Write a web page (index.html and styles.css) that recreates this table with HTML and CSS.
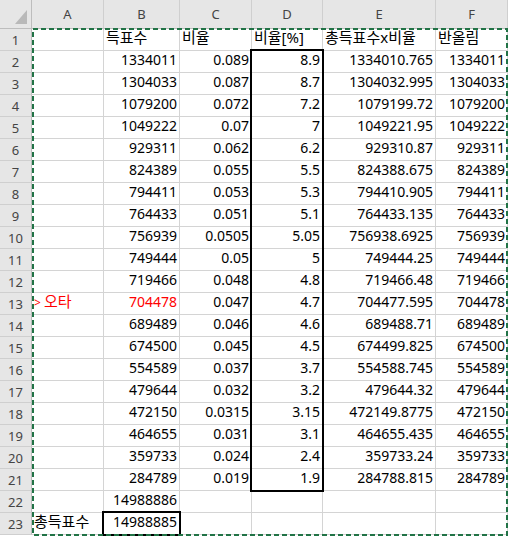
FILE: index.html
```
<!DOCTYPE html>
<html lang="ko">
<head>
<meta charset="utf-8">
<title>Sheet</title>
<link rel="stylesheet" href="styles.css">
</head>
<body>
<div class="sheet">
  <div class="corner"><svg class="tri" width="32" height="28" viewBox="0 0 32 28"><polygon points="15,24 27,24 27,10" fill="#b9b9b9"/></svg></div>
  <div class="ch">A</div><div class="ch">B</div><div class="ch">C</div><div class="ch">D</div><div class="ch">E</div><div class="ch">F</div>

  <div class="rh">1</div><div class="c"></div><div class="c ko">득표수</div><div class="c ko">비율</div><div class="c ko">비율[%]</div><div class="c ko">총득표수x비율</div><div class="c ko">반올림</div>
  <div class="rh">2</div><div class="c"></div><div class="c n">1334011</div><div class="c n">0.089</div><div class="c n">8.9</div><div class="c n">1334010.765</div><div class="c n">1334011</div>
  <div class="rh">3</div><div class="c"></div><div class="c n">1304033</div><div class="c n">0.087</div><div class="c n">8.7</div><div class="c n">1304032.995</div><div class="c n">1304033</div>
  <div class="rh">4</div><div class="c"></div><div class="c n">1079200</div><div class="c n">0.072</div><div class="c n">7.2</div><div class="c n">1079199.72</div><div class="c n">1079200</div>
  <div class="rh">5</div><div class="c"></div><div class="c n">1049222</div><div class="c n">0.07</div><div class="c n">7</div><div class="c n">1049221.95</div><div class="c n">1049222</div>
  <div class="rh">6</div><div class="c"></div><div class="c n">929311</div><div class="c n">0.062</div><div class="c n">6.2</div><div class="c n">929310.87</div><div class="c n">929311</div>
  <div class="rh">7</div><div class="c"></div><div class="c n">824389</div><div class="c n">0.055</div><div class="c n">5.5</div><div class="c n">824388.675</div><div class="c n">824389</div>
  <div class="rh">8</div><div class="c"></div><div class="c n">794411</div><div class="c n">0.053</div><div class="c n">5.3</div><div class="c n">794410.905</div><div class="c n">794411</div>
  <div class="rh">9</div><div class="c"></div><div class="c n">764433</div><div class="c n">0.051</div><div class="c n">5.1</div><div class="c n">764433.135</div><div class="c n">764433</div>
  <div class="rh">10</div><div class="c"></div><div class="c n">756939</div><div class="c n">0.0505</div><div class="c n">5.05</div><div class="c n">756938.6925</div><div class="c n">756939</div>
  <div class="rh">11</div><div class="c"></div><div class="c n">749444</div><div class="c n">0.05</div><div class="c n">5</div><div class="c n">749444.25</div><div class="c n">749444</div>
  <div class="rh">12</div><div class="c"></div><div class="c n">719466</div><div class="c n">0.048</div><div class="c n">4.8</div><div class="c n">719466.48</div><div class="c n">719466</div>
  <div class="rh">13</div><div class="c ko red"><span class="gt">&gt;</span>오타</div><div class="c n red">704478</div><div class="c n">0.047</div><div class="c n">4.7</div><div class="c n">704477.595</div><div class="c n">704478</div>
  <div class="rh">14</div><div class="c"></div><div class="c n">689489</div><div class="c n">0.046</div><div class="c n">4.6</div><div class="c n">689488.71</div><div class="c n">689489</div>
  <div class="rh">15</div><div class="c"></div><div class="c n">674500</div><div class="c n">0.045</div><div class="c n">4.5</div><div class="c n">674499.825</div><div class="c n">674500</div>
  <div class="rh">16</div><div class="c"></div><div class="c n">554589</div><div class="c n">0.037</div><div class="c n">3.7</div><div class="c n">554588.745</div><div class="c n">554589</div>
  <div class="rh">17</div><div class="c"></div><div class="c n">479644</div><div class="c n">0.032</div><div class="c n">3.2</div><div class="c n">479644.32</div><div class="c n">479644</div>
  <div class="rh">18</div><div class="c"></div><div class="c n">472150</div><div class="c n">0.0315</div><div class="c n">3.15</div><div class="c n">472149.8775</div><div class="c n">472150</div>
  <div class="rh">19</div><div class="c"></div><div class="c n">464655</div><div class="c n">0.031</div><div class="c n">3.1</div><div class="c n">464655.435</div><div class="c n">464655</div>
  <div class="rh">20</div><div class="c"></div><div class="c n">359733</div><div class="c n">0.024</div><div class="c n">2.4</div><div class="c n">359733.24</div><div class="c n">359733</div>
  <div class="rh">21</div><div class="c"></div><div class="c n">284789</div><div class="c n">0.019</div><div class="c n">1.9</div><div class="c n">284788.815</div><div class="c n">284789</div>
  <div class="rh">22</div><div class="c"></div><div class="c n">14988886</div><div class="c"></div><div class="c"></div><div class="c"></div><div class="c"></div>
  <div class="rh">23</div><div class="c ko">총득표수</div><div class="c n">14988885</div><div class="c"></div><div class="c"></div><div class="c"></div><div class="c"></div>

  <div class="sel sel-d"></div>
  <div class="sel sel-b"></div>
  <svg class="marquee" width="508" height="537" viewBox="0 0 508 537"><rect x="33" y="29" width="474" height="506" fill="none" stroke="#217346" stroke-width="2" stroke-dasharray="5 3"/></svg>
</div>
</body>
</html>
```

FILE: styles.css
```
* { box-sizing: border-box; margin: 0; padding: 0; }
html, body { background: #ffffff; }
body { width: 508px; height: 537px; overflow: hidden; }

.sheet {
  position: relative;
  display: grid;
  grid-template-columns: 32px 72px 76px 72px 71px 113px 72px;
  grid-template-rows: 29px repeat(23, 22px);
  font-family: "Noto Sans", "Noto Sans CJK KR", sans-serif;
  font-size: 14px;
  color: #000;
}

.corner {
  background: #e6e6e6;
  border-right: 1px solid #bdbdbd;
  border-bottom: 1px solid #bdbdbd;
  position: relative;
}
.tri { display: block; }

.ch, .rh {
  background: #e6e6e6;
  color: #444;
  font-size: 13px;
  display: flex;
  align-items: center;
  justify-content: center;
}
.ch {
  border-right: 1px solid #cfcfcf;
  border-bottom: 1px solid #bdbdbd;
}
.rh {
  border-right: 1px solid #bdbdbd;
  border-bottom: 1px solid #cfcfcf;
}

.c {
  border-right: 1px solid #d4d4d4;
  border-bottom: 1px solid #d4d4d4;
  line-height: 17px;
  padding: 0 2px;
  white-space: nowrap;
}
.n { text-align: right; }
.ko { font-size: 15px; }
.red { color: #ff0000; }
.gt { font-size: 12px; margin-right: 3px; }

.sel {
  position: absolute;
  border: 2px solid #000;
  pointer-events: none;
}
.sel-d { left: 250px; top: 49px; width: 74px; height: 443px; }
.sel-b { left: 102px; top: 511px; width: 79px; height: 25px; }

.marquee {
  position: absolute;
  left: 0;
  top: 0;
  pointer-events: none;
}
```
